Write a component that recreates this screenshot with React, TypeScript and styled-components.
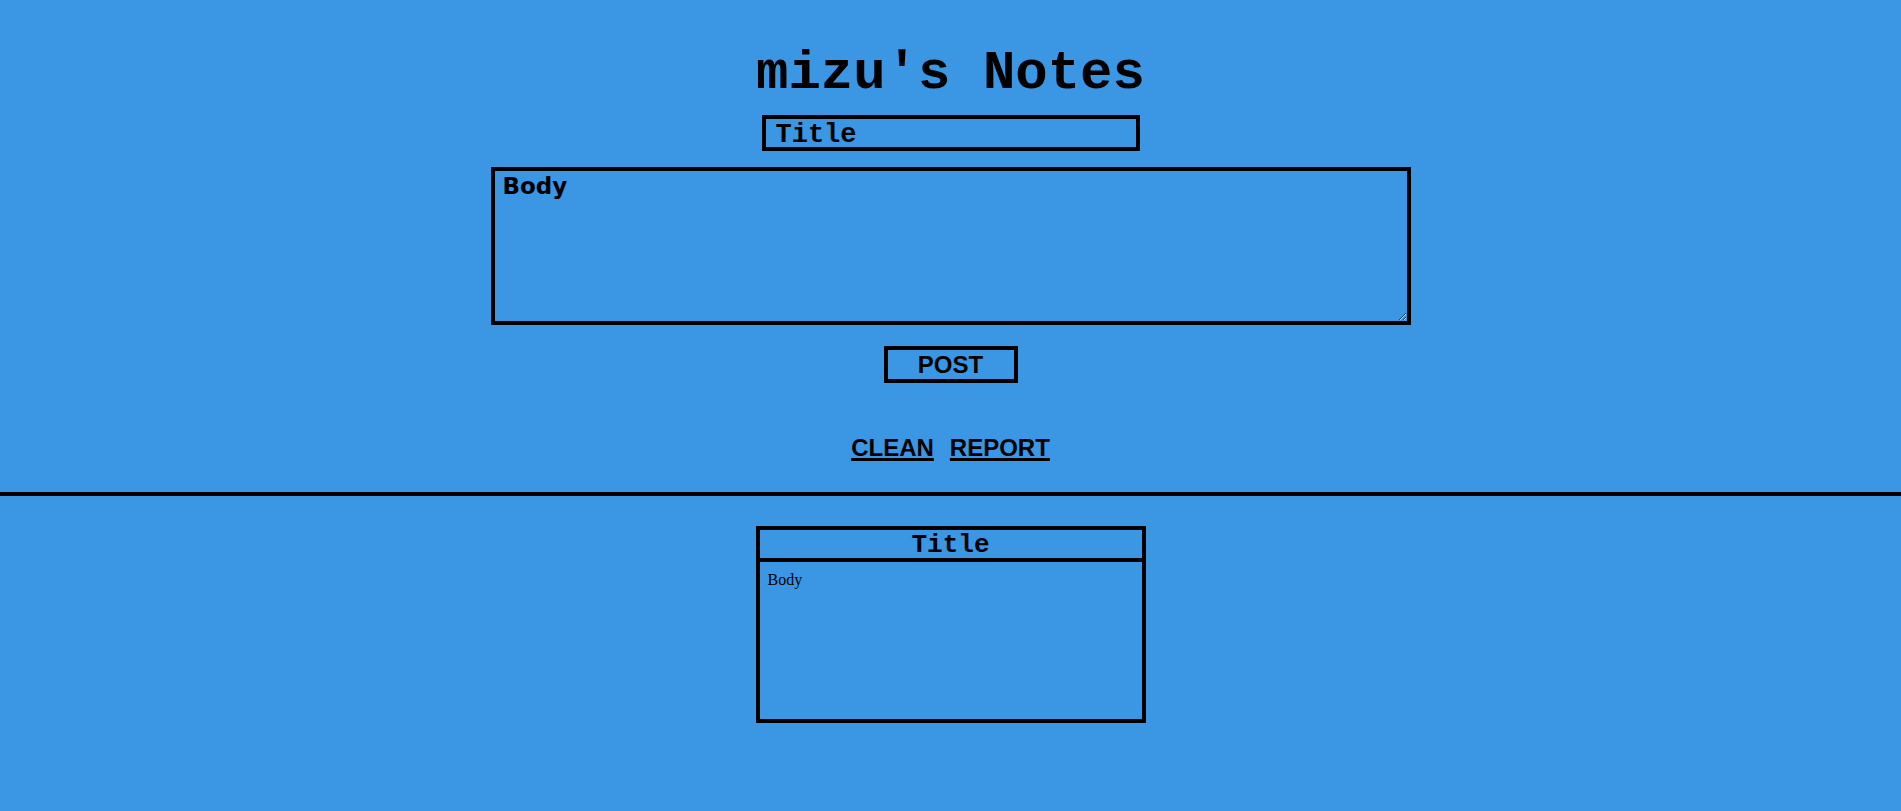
import * as React from "react";
import styled, { createGlobalStyle } from "styled-components";

const GlobalStyle = createGlobalStyle`
  html, body {
    margin: 0;
    padding: 0;
    background: #3b96e4;
    color: #000;
  }
  body {
    min-height: 811px;
  }
`;

const Page = styled.div`
  display: flex;
  flex-direction: column;
  align-items: center;
`;

const Heading = styled.h1`
  margin: 0;
  padding-top: 42px;
  font-family: "Liberation Mono", monospace;
  font-weight: bold;
  font-size: 54px;
  line-height: 64px;
`;

const Form = styled.form`
  display: flex;
  flex-direction: column;
  align-items: center;
  margin-top: 9px;
`;

const TitleInput = styled.input`
  box-sizing: border-box;
  width: 378px;
  height: 36px;
  border: 4px solid #000;
  background: transparent;
  padding: 4px 10px 0;
  font-family: "Liberation Mono", monospace;
  font-weight: bold;
  font-size: 27px;
  color: #000;
  outline: none;
  &::placeholder {
    color: #000;
    opacity: 1;
  }
`;

const BodyInput = styled.textarea`
  box-sizing: border-box;
  width: 920px;
  height: 158px;
  margin-top: 16px;
  border: 4px solid #000;
  background: transparent;
  padding: 2px 8px;
  font-family: "DejaVu Sans", sans-serif;
  font-weight: bold;
  font-size: 23px;
  color: #000;
  outline: none;
  &::placeholder {
    color: #000;
    opacity: 1;
  }
`;

const PostButton = styled.button`
  box-sizing: border-box;
  width: 134px;
  height: 37px;
  margin-top: 21px;
  border: 4px solid #000;
  background: transparent;
  padding: 0;
  font-family: "Liberation Sans", Arial, sans-serif;
  font-weight: bold;
  font-size: 24px;
  color: #000;
`;

const Links = styled.div`
  display: flex;
  gap: 16px;
  margin-top: 51px;
  line-height: 28px;
`;

const TextLink = styled.a`
  font-family: "Liberation Sans", Arial, sans-serif;
  font-weight: bold;
  font-size: 24px;
  color: #000;
  text-decoration: underline;
  text-decoration-thickness: 3px;
  cursor: pointer;
`;

const Divider = styled.hr`
  width: 100%;
  margin: 30px 0 0;
  border: none;
  height: 4px;
  background: #000;
`;

const NoteList = styled.div`
  display: flex;
  flex-wrap: wrap;
  justify-content: center;
  gap: 16px;
  margin-top: 30px;
`;

const Note = styled.div`
  box-sizing: border-box;
  width: 390px;
  height: 197px;
  border: 4px solid #000;
  display: flex;
  flex-direction: column;
`;

const NoteTitle = styled.div`
  box-sizing: border-box;
  height: 32px;
  padding-top: 2px;
  border-bottom: 4px solid #000;
  text-align: center;
  font-family: "Liberation Mono", monospace;
  font-weight: bold;
  font-size: 26px;
  line-height: 26px;
`;

const NoteBody = styled.div`
  flex: 1;
  padding: 9px 8px;
  font-family: "Liberation Serif", "Times New Roman", serif;
  font-size: 16px;
`;

const notes = [{ title: "Title", body: "Body" }];

export default function App() {
  return (
    <>
      <GlobalStyle />
      <Page>
        <Heading>mizu's Notes</Heading>
        <Form onSubmit={(e) => e.preventDefault()}>
          <TitleInput placeholder="Title" />
          <BodyInput placeholder="Body" />
          <PostButton type="submit">POST</PostButton>
        </Form>
        <Links>
          <TextLink>CLEAN</TextLink>
          <TextLink>REPORT</TextLink>
        </Links>
        <Divider />
        <NoteList>
          {notes.map((n, i) => (
            <Note key={i}>
              <NoteTitle>{n.title}</NoteTitle>
              <NoteBody>{n.body}</NoteBody>
            </Note>
          ))}
        </NoteList>
      </Page>
    </>
  );
}
